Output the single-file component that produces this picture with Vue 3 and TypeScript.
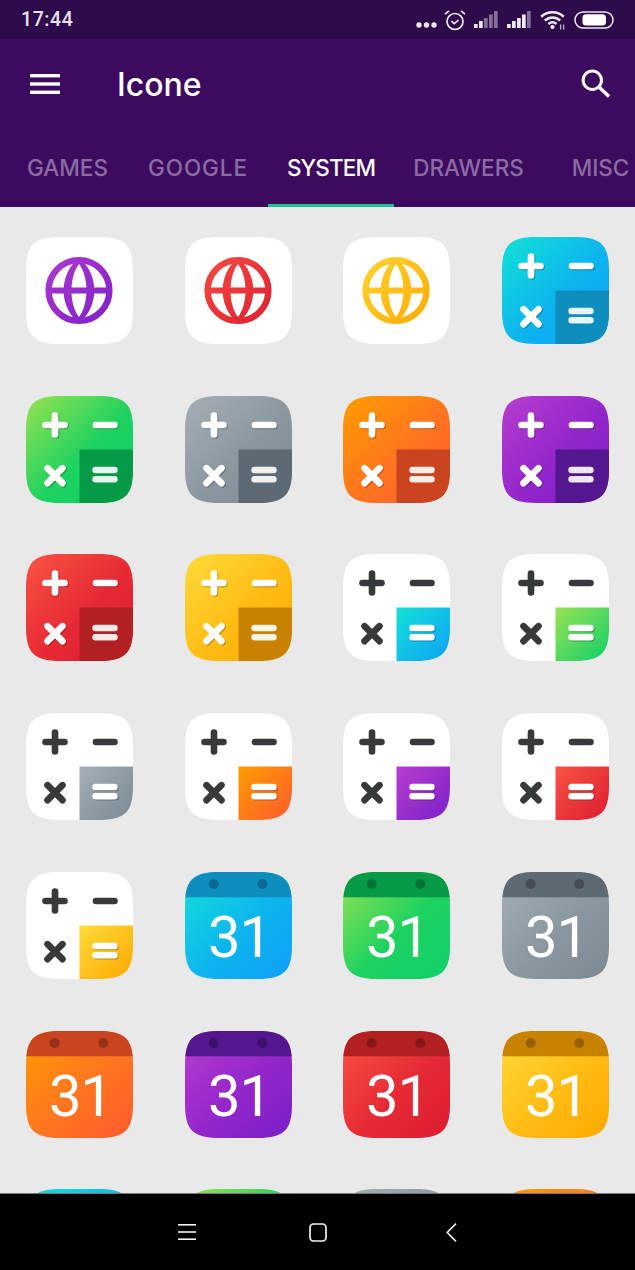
<template>
  <div class="screen">
    <!-- Status bar -->
    <div class="status-bar">
      <span class="clock">17:44</span>
      <div class="status-icons">
        <svg class="dots" width="21" height="6" viewBox="0 0 21 6">
          <circle cx="3" cy="3" r="2.7" /><circle cx="10.5" cy="3" r="2.7" /><circle cx="18" cy="3" r="2.7" />
        </svg>
        <svg class="alarm" width="22" height="22" viewBox="0 0 22 22" fill="none">
          <circle cx="11" cy="12.5" r="8" stroke-width="1.7" />
          <path d="M7.4 12.2l2.8 2.4 4.4-3.6" stroke-width="1.6" />
          <path d="M1 5.2 5 1.8M21 5.2 17 1.8" stroke-width="1.7" />
        </svg>
        <svg v-for="(s, n) in signals" :key="n" class="signal" width="24" height="17" viewBox="0 0 24 17">
          <rect v-for="(b, i) in signalBars" :key="i" :x="b.x" :y="b.y" width="3.7" :height="b.h" :opacity="i < s ? 1 : 0.45" />
        </svg>
        <svg class="wifi" width="26" height="20" viewBox="0 0 26 20" fill="none">
          <path d="M1.2 6.8C7.6 .8 17.4 .8 23.8 6.8" stroke-width="2.6" />
          <path d="M4.8 10.6c4.6-4.2 10.8-4.2 15.4 0" stroke-width="2.6" />
          <path d="M8.4 14c2.6-2.2 5.6-2.2 8.2 0" stroke-width="2.4" />
          <circle class="wifi-dot" cx="12.5" cy="17" r="2.1" />
          <path d="M20.6 14.6v5M23.6 14.6v5" stroke-width="1.3" opacity=".75" />
        </svg>
        <svg class="battery" width="40" height="18" viewBox="0 0 40 18" fill="none">
          <rect x="1" y="1" width="38" height="16" rx="8" stroke-width="1.5" />
          <rect class="battery-fill" x="8.5" y="3.2" width="23.5" height="11.4" rx="3.5" />
        </svg>
      </div>
    </div>

    <!-- App bar -->
    <header class="app-bar">
      <div class="toolbar">
        <svg class="menu-icon" width="30" height="20" viewBox="0 0 30 20">
          <rect x="0" y="0" width="30" height="3.4" />
          <rect x="0" y="8.3" width="30" height="3.4" />
          <rect x="0" y="16.6" width="30" height="3.4" />
        </svg>
        <h1 class="title">Icone</h1>
        <svg class="search-icon" width="30" height="30" viewBox="0 0 30 30" fill="none">
          <circle cx="11.3" cy="11.2" r="9.2" stroke-width="3" />
          <path d="M18 18 28 27.6" stroke-width="3.4" />
        </svg>
      </div>
      <nav class="tabs">
        <span
          v-for="tab in tabs"
          :key="tab.label"
          class="tab"
          :class="{ active: tab.label === 'SYSTEM' }"
          :style="{ width: tab.width + 'px', letterSpacing: tab.spacing + 'px' }"
        >{{ tab.label }}</span>
      </nav>
    </header>

    <!-- Icon grid -->
    <main class="grid">
      <div v-for="(icon, i) in icons" :key="i" class="cell">
        <svg width="107" height="107" viewBox="0 0 107 107">
          <defs>
            <linearGradient :id="`g${i}`" x1="0" y1="0" x2="1" y2="1">
              <stop offset="0" :stop-color="palette[icon.color].from" />
              <stop offset=".55" :stop-color="palette[icon.color].mid" />
              <stop offset="1" :stop-color="palette[icon.color].to" />
            </linearGradient>
            <linearGradient :id="`u${i}`" gradientUnits="userSpaceOnUse" x1="8" y1="8" x2="90" y2="90">
              <stop offset="0" :stop-color="palette[icon.color].from" />
              <stop offset="1" :stop-color="palette[icon.color].to" />
            </linearGradient>
            <linearGradient :id="`q${i}`" gradientUnits="userSpaceOnUse" x1="53.5" y1="53.5" x2="107" y2="107">
              <stop offset="0" :stop-color="palette[icon.color].from" />
              <stop offset="1" :stop-color="palette[icon.color].to" />
            </linearGradient>
            <clipPath :id="`c${i}`"><path :d="squircle" /></clipPath>
            <clipPath :id="`r${i}`"><circle cx="53" cy="53.5" r="32" /></clipPath>
          </defs>

          <!-- Globe -->
          <template v-if="icon.kind === 'globe'">
            <path :d="squircle" fill="#fff" />
            <circle cx="53" cy="53.5" r="30.4" fill="none" :stroke="`url(#u${i})`" stroke-width="6.4" />
            <path :d="lens" fill-rule="evenodd" :fill="`url(#u${i})`" :clip-path="`url(#r${i})`" />
            <rect x="22" y="50.5" width="62" height="6" :fill="`url(#u${i})`" />
          </template>

          <!-- Calculator, coloured or on white -->
          <template v-else-if="icon.kind === 'calc' || icon.kind === 'calcWhite'">
            <path :d="squircle" :fill="icon.kind === 'calc' ? `url(#g${i})` : '#fff'" />
            <rect
              x="53.5" y="53.5" width="53.5" height="53.5"
              :clip-path="`url(#c${i})`"
              :fill="icon.kind === 'calc' ? palette[icon.color].dark : `url(#q${i})`"
            />
            <g
              :class="{ symbols: icon.kind === 'calc' }"
              fill="none"
              stroke-width="6.6"
              stroke-linecap="round"
              :stroke="icon.kind === 'calc' ? '#fff' : '#37393c'"
            >
              <path d="M19.5 29H38.5M29 19.5V38.5" />
              <path d="M70 29H88.5" />
              <path d="M21.5 72.2 36.5 87.2M36.5 72.2 21.5 87.2" />
            </g>
            <g
              :class="{ symbols: icon.kind === 'calcWhite' }"
              fill="none"
              stroke="#fff"
              :stroke-opacity="icon.kind === 'calc' ? 0.9 : 1"
              stroke-width="6.4"
              stroke-linecap="round"
            >
              <path d="M69.5 74H88.5M69.5 83.2H88.5" />
            </g>
          </template>

          <!-- Calendar -->
          <template v-else-if="icon.kind === 'calendar'">
            <path :d="squircle" :fill="`url(#g${i})`" />
            <rect x="0" y="0" width="107" height="25.3" :clip-path="`url(#c${i})`" :fill="palette[icon.color].dark" />
            <circle cx="28.7" cy="12" r="5" :fill="palette[icon.color].dot" />
            <circle cx="77.3" cy="12" r="5" :fill="palette[icon.color].dot" />
            <text class="day" x="54.5" y="85" text-anchor="middle">31</text>
          </template>

          <!-- Only the top of this row is on screen -->
          <path v-else :d="squircle" :fill="`url(#g${i})`" />
        </svg>
      </div>
    </main>

    <!-- Navigation bar -->
    <footer class="nav-bar">
      <svg class="nav-menu" width="18" height="16" viewBox="0 0 18 16">
        <rect x="0" y="0" width="18" height="1.6" /><rect x="0" y="7.2" width="18" height="1.6" /><rect x="0" y="14.4" width="18" height="1.6" />
      </svg>
      <svg class="nav-home" width="18" height="19" viewBox="0 0 18 19" fill="none">
        <rect x="1" y="1" width="16" height="17" rx="3.5" />
      </svg>
      <svg class="nav-back" width="11" height="19" viewBox="0 0 11 19" fill="none">
        <path d="M10 .6 1.2 9.5 10 18.4" />
      </svg>
    </footer>
  </div>
</template>

<script setup lang="ts">
type Kind = 'globe' | 'calc' | 'calcWhite' | 'calendar' | 'tile'
type Color = 'blue' | 'green' | 'gray' | 'orange' | 'purple' | 'red' | 'yellow'

interface Shade {
  from: string
  mid: string
  to: string
  dark: string
  dot: string
}

const palette: Record<Color, Shade> = {
  blue: { from: '#12e2d6', mid: '#0db4ee', to: '#0e9ff8', dark: '#0e8dbf', dot: '#0b6a92' },
  green: { from: '#98e251', mid: '#1dd25f', to: '#0fcf6c', dark: '#059a46', dot: '#057336' },
  gray: { from: '#a4afb5', mid: '#8b979f', to: '#7c8993', dark: '#5e6a73', dot: '#434d55' },
  orange: { from: '#ff9d00', mid: '#ff7420', to: '#ff5a2e', dark: '#ca4420', dot: '#963217' },
  purple: { from: '#b83dd0', mid: '#9326ca', to: '#7a1fc8', dark: '#54178f', dot: '#3e106b' },
  red: { from: '#fb5344', mid: '#e62a35', to: '#dc1c30', dark: '#b22022', dot: '#851718' },
  yellow: { from: '#ffdb3a', mid: '#ffbc14', to: '#ffa800', dark: '#c98200', dot: '#966000' },
}

const squircle =
  'M0 34C0 8 8 0 34 0H73C99 0 107 8 107 34V73C107 99 99 107 73 107H34C8 107 0 99 0 73Z'

// Outer and inner lens of the globe, the gap between them is the meridian
const lens =
  'M53 21C73.5 37 73.5 70 53 86C32.5 70 32.5 37 53 21Z' +
  'M53 27C63 40 63 67 53 80C43 67 43 40 53 27Z'

const tabs = [
  { label: 'GAMES', width: 121, spacing: 0 },
  { label: 'GOOGLE', width: 140, spacing: 0.9 },
  { label: 'SYSTEM', width: 126, spacing: -0.9 },
  { label: 'DRAWERS', width: 149, spacing: 0 },
  { label: 'MISC', width: 115, spacing: 0 },
]

const signals = [2, 4]
const signalBars = [
  { x: 0, y: 13, h: 4 },
  { x: 5, y: 10, h: 7 },
  { x: 10, y: 7, h: 10 },
  { x: 15, y: 3.5, h: 13.5 },
  { x: 20, y: 0, h: 17 },
]

const row = (kind: Kind, colors: Color[]) => colors.map((color) => ({ kind, color }))

const icons = [
  ...row('globe', ['purple', 'red', 'yellow']),
  ...row('calc', ['blue', 'green', 'gray', 'orange', 'purple', 'red', 'yellow']),
  ...row('calcWhite', ['blue', 'green', 'gray', 'orange', 'purple', 'red', 'yellow']),
  ...row('calendar', ['blue', 'green', 'gray', 'orange', 'purple', 'red', 'yellow']),
  ...row('tile', ['blue', 'green', 'gray', 'orange']),
]
</script>

<style>
html,
body {
  margin: 0;
  background: #000;
}
</style>

<style scoped>
.screen {
  width: 635px;
  height: 1270px;
  display: flex;
  flex-direction: column;
  overflow: hidden;
  font-family: Inter, "Noto Sans", sans-serif;
  background: #e9e9e9;
}

/* Status bar */
.status-bar {
  height: 39px;
  flex: none;
  display: flex;
  align-items: center;
  justify-content: space-between;
  padding: 0 21px;
  box-sizing: border-box;
  background: #2e0b4b;
  color: #e9e2ef;
}

.clock {
  font-family: Roboto, sans-serif;
  font-size: 19.5px;
  font-weight: 500;
  letter-spacing: 0.6px;
}

.status-icons {
  display: flex;
  align-items: center;
  gap: 9px;
}

.status-icons svg {
  display: block;
  stroke: #efe9f4;
  fill: none;
}

.status-icons .dots,
.status-icons .signal {
  fill: #efe9f4;
  stroke: none;
}

.status-icons .dots {
  margin-top: 11px;
  margin-right: -2px;
}

.status-icons .alarm {
  margin-right: -1px;
}

.status-icons .battery {
  margin-left: -1px;
}

.status-icons .wifi-dot,
.status-icons .battery-fill {
  fill: #fff;
  stroke: none;
}

/* App bar */
.app-bar {
  height: 168px;
  flex: none;
  background: #3c0b5f;
  display: flex;
  flex-direction: column;
}

.toolbar {
  height: 90px;
  display: flex;
  align-items: center;
  padding: 0 24px 0 30px;
}

.menu-icon {
  fill: #fff;
}

.title {
  margin: 0 0 0 57px;
  flex: 1;
  font-size: 32px;
  font-weight: 450;
  color: #fff;
}

.search-icon {
  stroke: #fff;
}

.tabs {
  height: 78px;
  display: flex;
  padding-left: 7px;
  overflow: hidden;
}

.tab {
  flex: none;
  height: 100%;
  padding-top: 23px;
  box-sizing: border-box;
  font-size: 22.5px;
  font-weight: 500;
  line-height: 32px;
  text-align: center;
  color: #8b6ba3;
  border-bottom: 3px solid transparent;
  white-space: nowrap;
}

.tab.active {
  color: #fff;
  border-bottom-color: #1dc497;
}

/* Icon grid */
.grid {
  flex: 1;
  min-height: 0;
  display: grid;
  grid-template-columns: repeat(4, 1fr);
  grid-auto-rows: 158.75px;
  padding-top: 4px;
  overflow: hidden;
}

.cell {
  display: flex;
  align-items: center;
  justify-content: center;
}

.symbols {
  filter: drop-shadow(1px 1.2px 0.6px rgba(0, 0, 0, 0.28));
}

.day {
  font-family: Roboto, sans-serif;
  font-size: 58px;
  font-weight: 400;
  letter-spacing: -1px;
  fill: #fff;
}

/* Navigation bar */
.nav-bar {
  height: 77px;
  flex: none;
  display: flex;
  align-items: center;
  padding-left: 178px;
  background: #000;
  border-top: 1px solid #777;
  box-sizing: border-box;
}

.nav-menu {
  fill: #f2f2f2;
}

.nav-home {
  margin-left: 113px;
  stroke: #f2f2f2;
  stroke-width: 1.7;
}

.nav-back {
  margin-left: 119px;
  stroke: #f2f2f2;
  stroke-width: 1.6;
}
</style>
